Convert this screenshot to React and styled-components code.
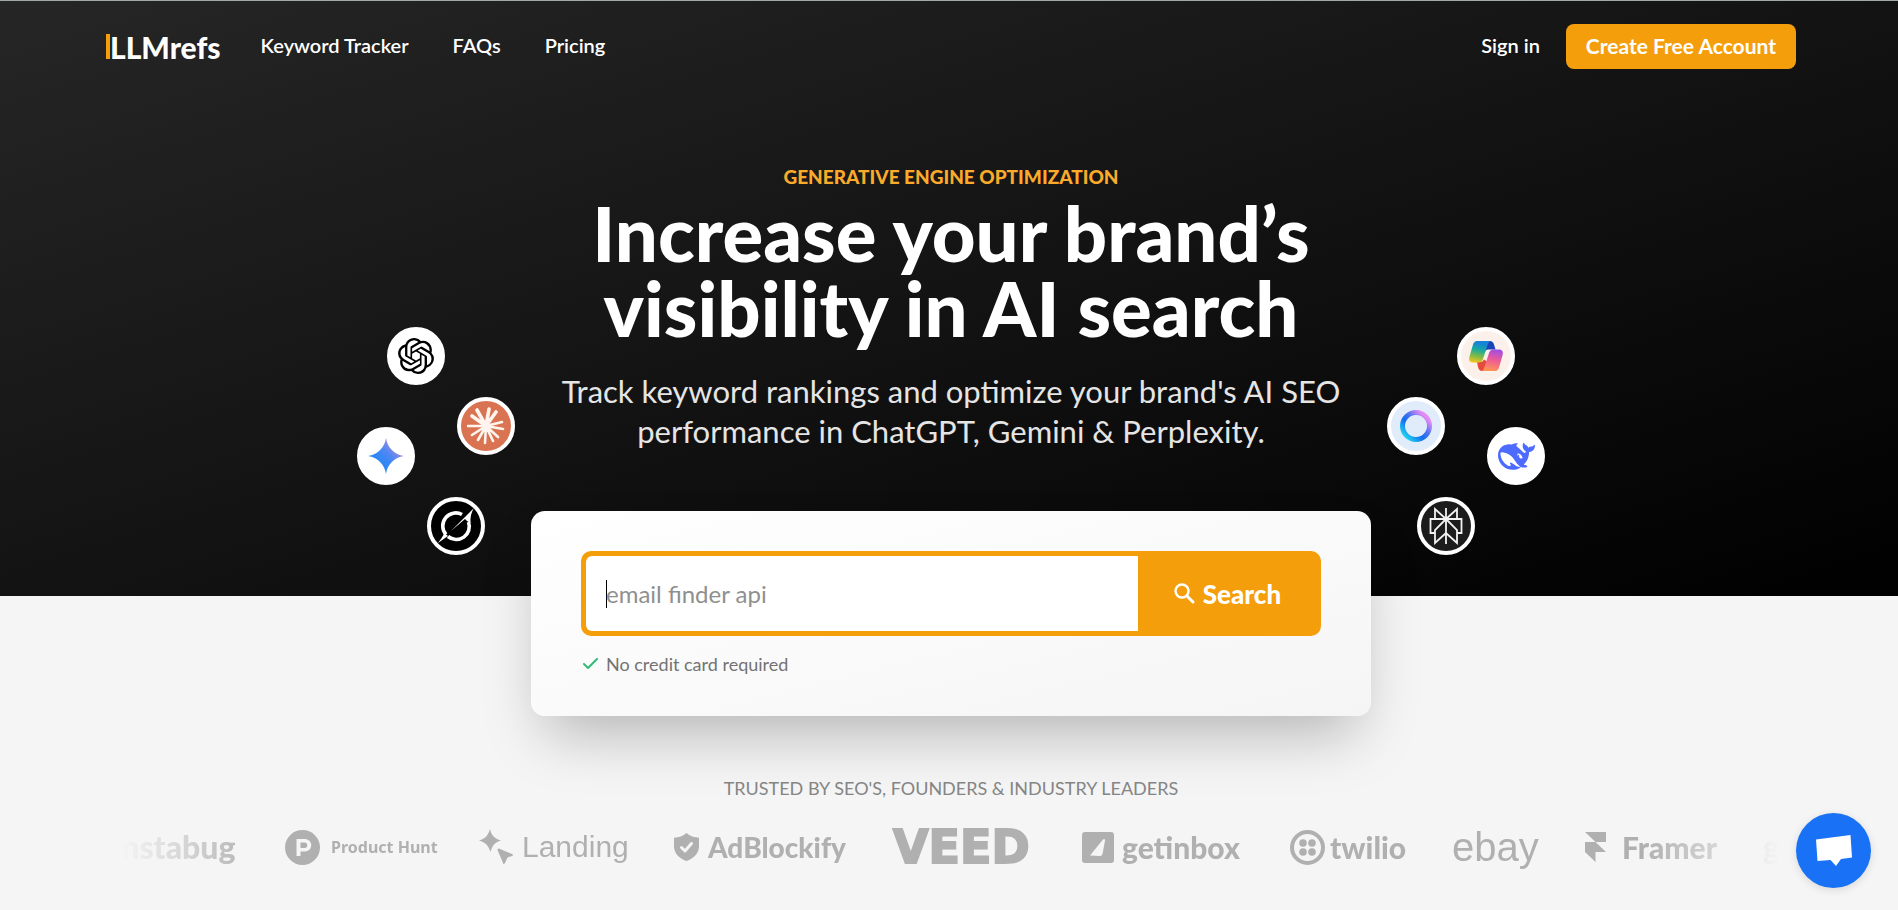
import React from "react";
import styled, { createGlobalStyle } from "styled-components";
import { SiOpenai } from "react-icons/si";

const GlobalStyle = createGlobalStyle`
  *, *::before, *::after { box-sizing: border-box; }
  body {
    margin: 0;
    background: #f5f5f5;
    font-family: Lato, "Liberation Sans", sans-serif;
    color: #171717;
  }
  h1, p, ul { margin: 0; padding: 0; }
  a { color: inherit; text-decoration: none; }
`;

const Page = styled.div`
  border-top: 1px solid #a3a9a9;
  overflow-x: hidden;
`;

const Hero = styled.section`
  background: linear-gradient(to bottom right, #262626, #000);
  color: #fff;
`;

const Header = styled.header`
  display: flex;
  align-items: center;
  padding: 23px 102px 0 106px;
`;

const Logo = styled.a`
  display: flex;
  align-items: center;
  height: 45px;
  font-size: 30px;
  font-weight: 900;
  line-height: 24px;

  &::before {
    content: "";
    width: 4px;
    height: 25px;
    background: #f59e0b;
  }
`;

const Nav = styled.nav`
  display: flex;
  gap: 44px;
  margin-left: 40px;
`;

const NavLink = styled.a`
  padding-bottom: 4px;
  font-size: 20px;
  font-weight: 600;
  line-height: 28px;
`;

const Account = styled.div`
  display: flex;
  align-items: center;
  gap: 26px;
  margin-left: auto;
`;

const SignUp = styled.a`
  padding: 7px 20px 9px;
  border-radius: 8px;
  background: #f59e0b;
  font-size: 21px;
  font-weight: 700;
  line-height: 29px;
`;

const HeroBody = styled.div`
  display: flex;
  justify-content: center;
  align-items: flex-end;
  gap: 16px;
  padding: 94px 0 41px 4px;
`;

const Copy = styled.div`
  width: 840px;
  padding-bottom: 104px;
  text-align: center;
`;

const Eyebrow = styled.p`
  color: #fbaa2a;
  font-size: 19px;
  font-weight: 900;
  line-height: 28px;
  text-transform: uppercase;
`;

const Title = styled.h1`
  margin-top: 4px;
  font-size: 76px;
  font-weight: 900;
  line-height: 75px;
`;

const Lead = styled.p`
  margin-top: 26px;
  color: #e5e5e5;
  font-size: 31px;
  line-height: 40px;
`;

const Cluster = styled.ul`
  position: relative;
  flex: none;
  width: 158px;
  height: 228px;
  list-style: none;
`;

const Engine = styled.li`
  position: absolute;
  top: ${(p) => p.$top}px;
  left: ${(p) => p.$left}px;
  display: grid;
  place-items: center;
  width: 58px;
  height: 58px;
  border: 4px solid #fff;
  border-radius: 50%;
  background: ${(p) => p.$fill || "#fff"};
  color: ${(p) => p.$ink || "#000"};

  svg { display: block; }
`;

const Card = styled.form`
  position: relative;
  width: 840px;
  margin: -85px auto 0;
  left: 2px;
  padding: 40px 50px;
  border-radius: 14px;
  background: linear-gradient(to bottom right, #fff, #f5f5f5);
  box-shadow: 0 30px 60px -14px rgba(0, 0, 0, 0.27);
`;

const SearchBar = styled.div`
  display: flex;
  border: 5px solid #f59e0b;
  border-radius: 10px;
  background: #f59e0b;
`;

const SearchInput = styled.input`
  flex: 1;
  min-width: 0;
  height: 75px;
  padding: 0 20px;
  border: 0;
  border-radius: 6px 0 0 6px;
  outline: 0;
  background: #fff linear-gradient(#000, #000) 20px 50% / 1px 28px no-repeat;
  font: 24px Lato, sans-serif;
  color: #171717;

  &::placeholder { color: #8f8f8f; opacity: 1; }
`;

const SearchButton = styled.button`
  display: flex;
  align-items: center;
  justify-content: center;
  gap: 8px;
  width: 178px;
  border: 0;
  background: none;
  color: #fff;
  font: 900 26px Lato, sans-serif;
`;

const Assurance = styled.p`
  display: flex;
  align-items: center;
  gap: 8px;
  margin-top: 16px;
  padding: 0 0 0 2px;
  color: #737373;
  font-size: 18px;
  line-height: 24px;
`;

const Trusted = styled.section`
  padding: 59px 102px 34px 106px;
`;

const TrustedTitle = styled.p`
  color: #868686;
  font-size: 18px;
  line-height: 26px;
  text-align: center;
  text-transform: uppercase;
`;

const Brands = styled.ul`
  display: flex;
  align-items: center;
  gap: 45px;
  height: 60px;
  margin-top: 16px;
  padding-left: 7px;
  overflow: hidden;
  list-style: none;
  mask-image: linear-gradient(to right, transparent 1%, #000 9%, #000 91%, transparent 99%);
`;

const Brand = styled.li`
  display: flex;
  align-items: center;
  flex: none;
  gap: ${(p) => p.$gap || 8}px;
  width: ${(p) => p.$width}px;
  color: #b0b0b0;
  font-family: ${(p) => p.$font || "Lato"}, sans-serif;
  font-size: ${(p) => p.$size || 28}px;
  font-weight: ${(p) => p.$weight || 900};
  line-height: 56px;
  white-space: nowrap;

  svg { display: block; flex: none; }
`;

const HeavyWord = styled.span`
  -webkit-text-stroke: 2px #b0b0b0;
`;

const ChatButton = styled.button`
  position: fixed;
  right: 27px;
  bottom: 22px;
  display: grid;
  place-items: center;
  width: 75px;
  height: 75px;
  padding: 0;
  border: 0;
  border-radius: 50%;
  background: #1972f5;
  box-shadow: 0 2px 8px rgba(0, 0, 0, 0.12);
`;

const ClaudeMark = () => (
  <svg width="38" height="38" viewBox="-19 -19 38 38" stroke="#fff5ee" strokeLinecap="round" aria-hidden="true">
    <path strokeWidth="3.600" d="M0 0L-9-16M0 0L-14-10M0 0L10-14M0 0L3-17" />
    <path strokeWidth="2.600" d="M0 0L-18 0M0 0L16-4M0 0L17 3M0 0L-14 9M0 0L-8 14M0 0L-1 17M0 0L7 15M0 0L12 11" />
  </svg>
);

const GeminiMark = () => (
  <svg width="36" height="38" viewBox="0 0 24 24" aria-hidden="true">
    <defs>
      <linearGradient id="gemini" x1="0" y1="1" x2="1" y2="0">
        <stop offset="0.25" stopColor="#1e88f5" />
        <stop offset="0.55" stopColor="#4d87f3" />
        <stop offset="0.85" stopColor="#b78be0" />
      </linearGradient>
    </defs>
    <path fill="url(#gemini)" d="M12 0c.9 6.4 5.6 11.1 12 12-6.400.9-11.100 5.600-12 12-.9-6.400-5.600-11.100-12-12C6.400 11.100 11.100 6.400 12 0z" />
  </svg>
);

const GrokMark = () => (
  <svg width="50" height="50" viewBox="-25 -25 50 50" fill="none" aria-hidden="true">
    <path stroke="#fff" strokeWidth="3.600" d="M6-11.500A13 13 0 0 0-10 8.500M-8 10.500A13 13 0 0 0 12.500-4" />
    <path fill="#fff" d="M-5 5L18-18Q14-12 14.500-3L11-5 9-7zM-18 17Q-14 12-11.500 7L-8 10z" />
  </svg>
);

const CopilotMark = () => (
  <svg width="34" height="30" viewBox="0 0 34 30" aria-hidden="true">
    <defs>
      <linearGradient id="copilotLeft" x1="0.5" y1="0" x2="0.3" y2="1">
        <stop offset="0.1" stopColor="#1583d8" />
        <stop offset="0.4" stopColor="#19a8a0" />
        <stop offset="0.7" stopColor="#7dbb49" />
        <stop offset="1" stopColor="#f0c51c" />
      </linearGradient>
      <linearGradient id="copilotRight" x1="0.7" y1="0" x2="0.5" y2="1">
        <stop offset="0" stopColor="#a04be8" />
        <stop offset="0.5" stopColor="#ee5c94" />
        <stop offset="1" stopColor="#ff9257" />
      </linearGradient>
    </defs>
    <path fill="#1a45b8" d="M16 0h5q3 0 4 3.500l1.500 5H19q-2 0-3 2z" />
    <path fill="#e64a3c" d="M8 21h3q3 0 4-2.500l3 2-2.500 9.500H13q-3 0-4-4z" />
    <path fill="url(#copilotLeft)" d="M8 0h13.500q-2 .5-3 4L14 18Q13 21.500 9.500 21.500H4Q-1 21.500.5 15.500L4 3.500Q5 0 8 0z" />
    <path fill="url(#copilotRight)" d="M26 30H12.500q2-.5 3-4L20 12Q21 8.500 24.500 8.500H30q5 0 3.500 6L30 26.500Q29 30 26 30z" />
  </svg>
);

const MetaMark = () => (
  <svg width="34" height="34" viewBox="0 0 34 34" aria-hidden="true">
    <defs>
      <linearGradient id="meta" x1="0.1" y1="0.9" x2="0.85" y2="0.15">
        <stop offset="0" stopColor="#22d0ee" />
        <stop offset="0.4" stopColor="#126cf0" />
        <stop offset="0.65" stopColor="#4f72f2" />
        <stop offset="1" stopColor="#e68bf3" />
      </linearGradient>
    </defs>
    <circle cx="17" cy="17" r="13.500" fill="none" stroke="url(#meta)" strokeWidth="5" />
  </svg>
);

const DeepseekMark = () => (
  <svg width="37" height="37" viewBox="0 0 24 24" fill="#4d6bfe" aria-hidden="true">
    <path d="M23.748 4.482c-.254-.124-.364.113-.512.234-.051.039-.094.09-.137.136-.372.397-.806.657-1.373.626-.829-.046-1.537.214-2.163.848-.133-.782-.575-1.248-1.247-1.548-.352-.156-.708-.311-.955-.65-.172-.241-.219-.51-.305-.774-.055-.16-.11-.323-.293-.35-.2-.031-.278.136-.356.276-.313.572-.434 1.202-.422 1.84.027 1.436.633 2.58 1.838 3.393.137.093.172.187.129.323-.082.28-.18.552-.266.833-.055.179-.137.217-.329.14a5.526 5.526 0 01-1.736-1.18c-.857-.828-1.631-1.742-2.597-2.458a11.365 11.365 0 00-.689-.471c-.985-.957.13-1.743.388-1.836.27-.098.093-.432-.779-.428-.872.004-1.67.295-2.687.684a3.055 3.055 0 01-.465.137 9.597 9.597 0 00-2.883-.102c-1.885.21-3.39 1.102-4.497 2.623C.082 8.606-.231 10.684.152 12.85c.403 2.284 1.569 4.175 3.36 5.653 1.858 1.533 3.997 2.284 6.438 2.14 1.482-.085 3.133-.284 4.994-1.86.47.234.962.327 1.78.397.63.059 1.236-.03 1.705-.128.735-.156.684-.837.419-.961-2.155-1.004-1.682-.595-2.113-.926 1.096-1.296 2.746-2.642 3.392-7.003.05-.347.007-.565 0-.845-.004-.17.035-.237.23-.256a4.173 4.173 0 001.545-.475c1.396-.763 1.96-2.015 2.093-3.517.02-.23-.004-.467-.247-.588zM11.581 18c-2.089-1.642-3.102-2.183-3.52-2.16-.392.024-.321.471-.235.763.09.288.207.486.371.739.114.167.192.416-.113.603-.673.416-1.842-.14-1.897-.167-1.361-.802-2.5-1.86-3.301-3.307-.774-1.393-1.224-2.887-1.298-4.482-.02-.386.093-.522.477-.592a4.696 4.696 0 011.529-.039c2.132.312 3.946 1.265 5.468 2.774.868.86 1.525 1.887 2.202 2.891.72 1.066 1.494 2.082 2.48 2.914.348.292.625.514.891.677-.802.09-2.14.11-3.054-.614zm1-6.44a.306.306 0 01.415-.287.302.302 0 01.2.288.306.306 0 01-.31.307.303.303 0 01-.304-.308zm3.11 1.596c-.2.081-.399.151-.59.16a1.245 1.245 0 01-.798-.254c-.274-.23-.47-.358-.552-.758a1.73 1.73 0 01.016-.588c.07-.327-.008-.537-.239-.727-.187-.156-.426-.199-.688-.199a.559.559 0 01-.254-.078c-.11-.054-.2-.19-.114-.358.028-.054.16-.186.192-.21.356-.202.767-.136 1.146.016.352.144.618.408 1.001.782.391.451.462.576.685.914.176.265.336.537.445.848.067.195-.019.354-.25.452z" />
  </svg>
);

const PerplexityMark = () => (
  <svg width="34" height="38" viewBox="-17 -19 34 38" fill="none" stroke="#f2f2f2" strokeWidth="1.8" aria-hidden="true">
    <path d="M0-18V18M0-7L-11-17V-7M0-7L11-17V-7M-11 7H-15.500V-7H15.500V7H11M0-7L-11 4V17L0 7 11 17V4L0-7" />
  </svg>
);

const SearchIcon = () => (
  <svg width="22" height="22" viewBox="0 0 22 22" fill="none" stroke="#fff" strokeLinecap="round" aria-hidden="true">
    <circle cx="9" cy="8" r="6.500" strokeWidth="2.400" />
    <path d="M14 13L20 19" strokeWidth="3" />
  </svg>
);

const CheckIcon = () => (
  <svg width="15" height="12" viewBox="0 0 15 12" fill="none" stroke="#2fbd75" strokeWidth="2" strokeLinecap="round" strokeLinejoin="round" aria-hidden="true">
    <path d="M1 6L5 10 14 1" />
  </svg>
);

const ProductHuntMark = () => (
  <svg width="35" height="35" viewBox="0 0 35 35" fill="#b0b0b0" aria-hidden="true">
    <path fillRule="evenodd" d="M17.500 0a17.500 17.500 0 1 0 0 35 17.500 17.500 0 1 0 0-35zM11.500 9H20a6 6 0 0 1 0 12.500h-4.500V26h-4zM15.500 12.500V18H19.500a2.700 2.700 0 0 0 0-5.500z" />
  </svg>
);

const LandingMark = () => (
  <svg width="35" height="36" viewBox="0 0 35 36" fill="#b0b0b0" aria-hidden="true">
    <path d="M11 0C12.500 6.500 15.500 9.500 22 11.500 15.500 13.500 13.500 16.500 11.500 23 9.500 16.500 6.500 13.500 0 11.500 6.500 9.500 9 6.500 11 0z" />
    <path d="M20 19.500L33 25Q35 26 33 27L28.500 28.500 26 34Q24.500 36 24 34L18.500 21Q18.500 19 20 19.500z" />
  </svg>
);

const ShieldMark = () => (
  <svg width="27" height="28" viewBox="0 0 27 28" aria-hidden="true">
    <path fill="#b0b0b0" d="M13.500 0C17 3 21 4.500 26 4.800V13C26 20 21 25.500 13.500 28 6 25.500 1 20 1 13V4.800C6 4.500 10 3 13.500 0z" />
    <path fill="none" stroke="#f5f5f5" strokeWidth="3" strokeLinecap="round" strokeLinejoin="round" d="M8.500 14.500L12 18 18.500 10.500" />
  </svg>
);

const InboxMark = () => (
  <svg width="32" height="31" viewBox="0 0 32 31" aria-hidden="true">
    <rect width="32" height="31" rx="3" fill="#b0b0b0" />
    <path fill="#f5f5f5" d="M8 23.500L21 7.500Q23 6 23 8.500L20.500 22Q20 24 18 24z" />
  </svg>
);

const TwilioMark = () => (
  <svg width="35" height="35" viewBox="0 0 35 35" fill="#b0b0b0" aria-hidden="true">
    <circle cx="17.500" cy="17.500" r="15.500" fill="none" stroke="#b0b0b0" strokeWidth="4" />
    <circle cx="13" cy="13" r="3.800" />
    <circle cx="22" cy="13" r="3.800" />
    <circle cx="13" cy="22" r="3.800" />
    <circle cx="22" cy="22" r="3.800" />
  </svg>
);

const FramerMark = () => (
  <svg width="21" height="30" viewBox="4 0 16 24" preserveAspectRatio="none" fill="#b0b0b0" aria-hidden="true">
    <path d="M4 0h16v8h-8zM4 8h8l8 8H4zM4 16h8v8z" />
  </svg>
);

const ChatIcon = () => (
  <svg width="36" height="32" viewBox="0 0 36 32" fill="#fff" aria-hidden="true">
    <path d="M0 4.500L34.500 0 36 22.500 25 24 20 31 14.500 25 1.500 26z" />
  </svg>
);

export default function App() {
  return (
    <Page>
      <GlobalStyle />
      <Hero>
        <Header>
          <Logo href="#">LLMrefs</Logo>
          <Nav>
            <NavLink href="#">Keyword Tracker</NavLink>
            <NavLink href="#">FAQs</NavLink>
            <NavLink href="#">Pricing</NavLink>
          </Nav>
          <Account>
            <NavLink href="#">Sign in</NavLink>
            <SignUp href="#">Create Free Account</SignUp>
          </Account>
        </Header>
        <HeroBody>
          <Cluster aria-label="AI engines">
            <Engine $top={0} $left={30}><SiOpenai size={36} /></Engine>
            <Engine $top={70} $left={100} $fill="#d97352"><ClaudeMark /></Engine>
            <Engine $top={100} $left={0}><GeminiMark /></Engine>
            <Engine $top={170} $left={70} $fill="#000"><GrokMark /></Engine>
          </Cluster>
          <Copy>
            <Eyebrow>Generative Engine Optimization</Eyebrow>
            <Title>Increase your brand’s<br />visibility in AI search</Title>
            <Lead>
              Track keyword rankings and optimize your brand's AI SEO<br />
              performance in ChatGPT, Gemini &amp; Perplexity.
            </Lead>
          </Copy>
          <Cluster aria-label="More AI engines">
            <Engine $top={0} $left={70} $fill="#fbf1ea"><CopilotMark /></Engine>
            <Engine $top={70} $left={0} $fill="#e1ecfb"><MetaMark /></Engine>
            <Engine $top={100} $left={100}><DeepseekMark /></Engine>
            <Engine $top={170} $left={30} $fill="#1c1c1c"><PerplexityMark /></Engine>
          </Cluster>
        </HeroBody>
      </Hero>
      <main>
        <Card onSubmit={(e) => e.preventDefault()}>
          <SearchBar>
            <SearchInput aria-label="Keyword" placeholder="email finder api" />
            <SearchButton type="submit"><SearchIcon />Search</SearchButton>
          </SearchBar>
          <Assurance><CheckIcon />No credit card required</Assurance>
        </Card>
        <Trusted>
          <TrustedTitle>Trusted by SEO's, founders &amp; industry leaders</TrustedTitle>
          <Brands>
            <Brand $width={127} $size={32}>instabug</Brand>
            <Brand $width={149} $size={16} $gap={11} $font="'Noto Sans'" $weight={700}><ProductHuntMark />Product Hunt</Brand>
            <Brand $width={149} $size={30} $font="'Liberation Sans'" $weight={400}><LandingMark />Landing</Brand>
            <Brand $width={175}><ShieldMark />AdBlockify</Brand>
            <Brand $width={144} $size={46} $font="'DejaVu Sans'" $weight={700}><HeavyWord>VEED</HeavyWord></Brand>
            <Brand $width={163} $size={30}><InboxMark />getinbox</Brand>
            <Brand $width={117} $size={30} $gap={5}><TwilioMark />twilio</Brand>
            <Brand $width={88} $size={40} $font="'Liberation Sans'" $weight={400}>ebay</Brand>
            <Brand $width={133} $size={30} $gap={16}><FramerMark />Framer</Brand>
            <Brand $width={34} $size={32}>go</Brand>
          </Brands>
        </Trusted>
      </main>
      <ChatButton type="button" aria-label="Open chat"><ChatIcon /></ChatButton>
    </Page>
  );
}
